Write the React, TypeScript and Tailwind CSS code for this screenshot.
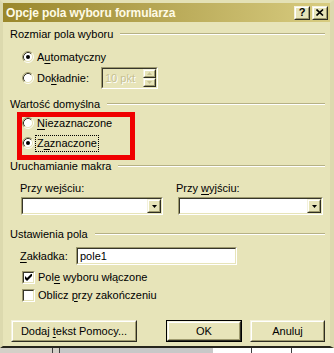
import React from "react";

// ─── Classic 3D bits ──────────────────────────────────────────────────────────
function Radio({ checked }: { checked?: boolean }) {
  return (
    <svg width="12" height="12" viewBox="0 0 12 12" className="shrink-0">
      <circle cx="6" cy="6" r="4.5" fill="#fff" />
      <path d="M2.11 9.89 A5.5 5.5 0 0 1 9.89 2.11" stroke="#9E9A6E" fill="none" />
      <path d="M9.89 2.11 A5.5 5.5 0 0 1 2.11 9.89" stroke="#fff" fill="none" />
      <path d="M2.82 9.18 A4.5 4.5 0 0 1 9.18 2.82" stroke="#36352A" fill="none" />
      <path d="M9.18 2.82 A4.5 4.5 0 0 1 2.82 9.18" stroke="#E7E4B9" fill="none" />
      {checked && <circle cx="6" cy="6" r="2" fill="#000" />}
    </svg>
  );
}

function Check({ checked }: { checked?: boolean }) {
  return (
    <div className="w-[13px] h-[13px] shrink-0 border border-t-[#9E9A6E] border-l-[#9E9A6E] border-b-white border-r-white">
      <div className="w-full h-full border border-t-[#36352A] border-l-[#36352A] border-b-[#E7E4B9] border-r-[#E7E4B9] bg-white flex items-center justify-center">
        {checked && (
          <svg width="7" height="7" viewBox="0 0 7 7">
            <polygon points="0,2 2,4 7,-1 7,2 2,7 0,5" fill="#000" />
          </svg>
        )}
      </div>
    </div>
  );
}

function Sunken({ className, inner, children }: { className: string; inner: string; children?: React.ReactNode }) {
  return (
    <div className={`border border-t-[#9E9A6E] border-l-[#9E9A6E] border-b-white border-r-white ${className}`}>
      <div className={`w-full h-full border border-t-[#36352A] border-l-[#36352A] border-b-[#E7E4B9] border-r-[#E7E4B9] ${inner}`}>
        {children}
      </div>
    </div>
  );
}

function Raised({ className, children }: { className: string; children?: React.ReactNode }) {
  return (
    <div className={`border border-t-[#F4F2DC] border-l-[#F4F2DC] border-b-[#2E2D22] border-r-[#2E2D22] bg-[#E7E4B9] ${className}`}>
      <div className="w-full h-full border border-t-white border-l-white border-b-[#9E9A6E] border-r-[#9E9A6E] flex items-center justify-center">
        {children}
      </div>
    </div>
  );
}

function Combo({ className }: { className: string }) {
  return (
    <Sunken className={className} inner="bg-white flex justify-end">
      <Raised className="w-[14px] h-full">
        <svg width="5" height="3" viewBox="0 0 5 3">
          <polygon points="0,0 5,0 2.5,3" fill="#000" />
        </svg>
      </Raised>
    </Sunken>
  );
}

function GroupHeader({ label, className }: { label: string; className: string }) {
  return (
    <div className={`h-[16px] flex items-center pl-[7px] pr-[5px] ${className}`}>
      <span>{label}</span>
      <div className="flex-1 ml-[7px] h-[2px] border-t border-t-[#B6B185] border-b border-b-white" />
    </div>
  );
}

const u = "underline underline-offset-[2px]";

// ─── Dialog ───────────────────────────────────────────────────────────────────
export default function App() {
  return (
    <div
      className="relative w-[334px] h-[353px] overflow-hidden bg-[#D4D0C8] text-[11px] text-black leading-none"
      style={{ fontFamily: "'Liberation Sans', Arial, sans-serif" }}
    >
      <div className="h-[348px] flex flex-col bg-[#E7E4B9] border-l-[3px] border-l-[#DCD9AE] border-r-[4px] border-r-[#DCD9AE] border-t-[3px] border-t-[#E4E1B6] border-b-2 border-b-[#26251C]">
        {/* Title bar */}
        <div className="h-[19px] shrink-0 flex items-center justify-between pl-[3px] pr-[2px] bg-gradient-to-r from-[#9A872A] to-[#D8CC80]">
          <span className="text-[12px] font-bold text-[#FFFBE6] tracking-[-0.1px]">Opcje pola wyboru formularza</span>
          <div className="flex gap-[2px]">
            <Raised className="w-[16px] h-[14px]">
              <span className="text-[11px] font-bold">?</span>
            </Raised>
            <Raised className="w-[16px] h-[14px]">
              <svg width="8" height="7" viewBox="0 0 8 7">
                <path d="M0.5 0.5 L7 6.5 M7 0.5 L0.5 6.5" stroke="#000" strokeWidth="1.6" />
              </svg>
            </Raised>
          </div>
        </div>

        {/* Body */}
        <div className="flex-1 flex flex-col">
          <GroupHeader label="Rozmiar pola wyboru" className="mt-[4px]" />
          <div className="mt-[7px] h-[16px] flex items-center gap-[3px] pl-[19px]">
            <Radio checked />
            <span>
              A<span className={u}>u</span>tomatyczny
            </span>
          </div>
          <div className="mt-[2px] h-[22px] flex items-center pl-[19px]">
            <Radio />
            <span className="ml-[3px] w-[64px]">
              Do<span className={u}>k</span>ładnie:
            </span>
            <Sunken className="w-[57px] h-[22px]" inner="bg-[#E7E4B9] flex items-center justify-between">
              <span className="pl-[2px] text-[#C6C192] [text-shadow:1px_1px_0_#fff]">10 pkt</span>
              <div className="flex flex-col h-full">
                <Raised className="w-[13px] flex-1">
                  <svg width="5" height="3" viewBox="0 0 5 3">
                    <polygon points="2.5,0 5,3 0,3" fill="#C6C192" />
                  </svg>
                </Raised>
                <Raised className="w-[13px] flex-1">
                  <svg width="5" height="3" viewBox="0 0 5 3">
                    <polygon points="0,0 5,0 2.5,3" fill="#C6C192" />
                  </svg>
                </Raised>
              </div>
            </Sunken>
          </div>

          <GroupHeader label="Wartość domyślna" className="mt-[7px]" />
          <div className="mt-[3px] h-[16px] flex items-center gap-[3px] pl-[19px]">
            <Radio />
            <span>
              <span className={u}>N</span>iezaznaczone
            </span>
          </div>
          <div className="mt-[4px] h-[16px] flex items-center gap-[1px] pl-[19px]">
            <Radio checked />
            <span className="px-[1px] py-[2px] border border-dotted border-black">
              Z<span className={u}>a</span>znaczone
            </span>
          </div>

          <GroupHeader label="Uruchamianie makra" className="mt-[7px]" />
          <div className="mt-[7px] h-[14px] flex items-center">
            <span className="ml-[17px] w-[156px]">
              Przy we<span className={u}>j</span>ściu:
            </span>
            <span>
              Przy <span className={u}>w</span>yjściu:
            </span>
          </div>
          <div className="mt-[2px] h-[18px] flex">
            <Combo className="ml-[18px] w-[142px] h-[18px]" />
            <Combo className="ml-[15px] w-[145px] h-[18px]" />
          </div>

          <GroupHeader label="Ustawienia pola" className="mt-[11px]" />
          <div className="mt-[5px] h-[18px] flex items-center">
            <span className="ml-[17px] w-[56px]">
              <span className={u}>Z</span>akładka:
            </span>
            <Sunken className="w-[161px] h-[18px]" inner="bg-white flex items-center pl-[2px]">
              pole1
            </Sunken>
          </div>
          <div className="mt-[4px] h-[16px] flex items-center gap-[3px] pl-[19px]">
            <Check checked />
            <span>
              Pol<span className={u}>e</span> wyboru włączone
            </span>
          </div>
          <div className="mt-[2px] h-[16px] flex items-center gap-[3px] pl-[19px]">
            <Check />
            <span>
              Oblicz <span className={u}>p</span>rzy zakończeniu
            </span>
          </div>

          <div className="mt-[17px] h-[22px] flex">
            <Raised className="ml-[8px] w-[126px] h-[22px]">
              <span>
                Dodaj <span className={u}>t</span>ekst Pomocy...
              </span>
            </Raised>
            <div className="ml-[29px] w-[76px] h-[22px] border border-black">
              <Raised className="w-full h-full">
                <span>OK</span>
              </Raised>
            </div>
            <Raised className="ml-[8px] w-[75px] h-[22px]">
              <span>Anuluj</span>
            </Raised>
          </div>
        </div>
      </div>

      {/* Window behind: status bar strip */}
      <div className="h-[5px] flex">
        <div className="w-[53px] border-r border-r-[#404040]" />
        <div className="w-[7px] border-r border-r-[#404040]" />
        <div className="w-[153px] bg-[#C8C8C8]" />
        <div className="w-[39px] bg-white border-r border-r-[#404040]" />
        <div className="w-[40px] bg-white border-r border-r-[#404040]" />
        <div className="flex-1 bg-white" />
      </div>

      {/* Red annotation box */}
      <div className="absolute left-[17px] top-[112px] w-[118px] h-[48px] border-[5px] border-[#F00000]" />
    </div>
  );
}
